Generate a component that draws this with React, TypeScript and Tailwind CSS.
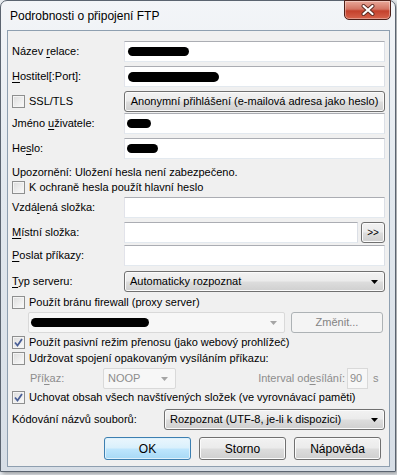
import type { ReactNode } from "react";

const box = "h-[21px] bg-white border border-[#abadb3] border-l-[#e2e3ea] border-r-[#dbdfe6] border-b-[#e3e9ef]";
const btn =
  "rounded-[3px] border border-[#707070] bg-[linear-gradient(to_bottom,#f2f2f2_0%,#ebebeb_48%,#dddddd_52%,#cfcfcf_100%)] shadow-[inset_0_0_0_1px_#fbfbfb]";
const btnOff = "rounded-[3px] border border-[#adb2b5] bg-[#f4f4f4] text-[#838383]";

function Row({ label, mt, children }: { label: ReactNode; mt: string; children: ReactNode }) {
  return (
    <div className={"flex items-center h-[21px] " + mt}>
      <div className="w-[112px] shrink-0">{label}</div>
      <div className="flex-1 flex gap-[3px]">{children}</div>
    </div>
  );
}

function Check({ checked, label, mt }: { checked?: boolean; label: ReactNode; mt: string }) {
  return (
    <div className={"flex items-center h-[14px] gap-[4px] " + mt}>
      <span className="w-[13px] h-[13px] border border-[#8e8f8f] bg-[linear-gradient(135deg,#dcdcdc,#fbfbfb)] shadow-[inset_0_0_0_1px_#f4f4f4] flex items-center justify-center">
        {checked && (
          <svg width="9" height="9" viewBox="0 0 9 9">
            <path d="M1 4.5 L3.5 7.5 L8 1" fill="none" stroke="#4a5f97" strokeWidth="1.8" />
          </svg>
        )}
      </span>
      <span>{label}</span>
    </div>
  );
}

function Arrow({ off }: { off?: boolean }) {
  return (
    <svg width="7" height="4" viewBox="0 0 7 4">
      <path d="M0 0 H7 L3.5 4 Z" fill={off ? "#a5a5a5" : "#000"} />
    </svg>
  );
}

function Blob({ w, ml, h = "h-[9px]" }: { w: string; ml?: string; h?: string }) {
  return <span className={"block rounded-full bg-black " + w + " " + h + " " + (ml ?? "ml-[3px]")} />;
}

export default function App() {
  return (
    <div className="w-[397px] h-[475px] bg-[#e9edf1] font-['Liberation_Sans',Arial,sans-serif] text-[11px] text-black [&_u]:underline-offset-2">
      <div className="relative w-[396px] h-[472px] rounded-t-[7px] border border-[#5b6470] bg-[linear-gradient(to_bottom,#f3f5f8_0%,#e2e8ee_40%,#d7dee6_100%)] shadow-[2px_2px_4px_rgba(0,0,0,0.35)]">
        <div className="h-[29px] flex items-center pl-[9px] text-[12px] [text-shadow:0_0_8px_#fff]">
          Podrobnosti o připojení FTP
        </div>
        <div className="absolute right-[4px] top-[-1px] w-[47px] h-[20px] rounded-b-[5px] border border-[#4d1f18] bg-[linear-gradient(to_bottom,#e9a899_0%,#d37564_45%,#c4412c_55%,#d6634c_100%)] shadow-[inset_0_0_0_1px_rgba(255,255,255,0.35)] flex items-center justify-center">
          <svg width="14" height="12" viewBox="0 0 14 12">
            <path d="M2.5 2 L11.5 10 M11.5 2 L2.5 10" stroke="#5a2a22" strokeWidth="4" strokeLinecap="round" />
            <path d="M2.5 2 L11.5 10 M11.5 2 L2.5 10" stroke="#fff" strokeWidth="2.2" strokeLinecap="round" />
          </svg>
        </div>

        <div className="ml-[6px] w-[383px] h-[437px] border border-[#8e9fb0] bg-[#f0f0f0] pl-[4px] pr-[4px] pt-[10px]">
          <Row label={<>Název <u>r</u>elace:</>} mt="">
            <div className={box + " flex-1 flex items-center border-[#7eb4ea]"}>
              <Blob w="w-[61px]" />
            </div>
          </Row>
          <Row label={<><u>H</u>ostitel[:Port]:</>} mt="mt-[4px]">
            <div className={box + " flex-1 flex items-center"}>
              <Blob w="w-[91px]" h="h-[10px]" />
            </div>
          </Row>
          <div className="flex items-center h-[21px] mt-[4px]">
            <div className="w-[112px]">
              <Check label="SSL/TLS" mt="" />
            </div>
            <div className={btn + " flex-1 h-[21px] flex items-center justify-center"}>
              Anonymní přihlášení (e-mailová adresa jako heslo)
            </div>
          </div>
          <Row label={<>Jméno <u>u</u>živatele:</>} mt="mt-[1px]">
            <div className={box + " flex-1 flex items-center"}>
              <Blob w="w-[24px]" ml="ml-[2px]" />
            </div>
          </Row>
          <Row label={<>He<u>s</u>lo:</>} mt="mt-[4px]">
            <div className={box + " flex-1 flex items-center"}>
              <Blob w="w-[31px]" ml="ml-[2px]" />
            </div>
          </Row>
          <div className="h-[14px] mt-[6px] flex items-center">Upozornění: Uložení hesla není zabezpečeno.</div>
          <Check label="K ochraně hesla použít hlavní heslo" mt="mt-[1px]" />
          <Row label={<>Vzdá<u>l</u>ená složka:</>} mt="mt-[3px]">
            <div className={box + " flex-1"} />
          </Row>
          <Row label={<><u>M</u>ístní složka:</>} mt="mt-[4px]">
            <div className={box + " flex-1"} />
            <div className={btn + " w-[24px] h-[21px] flex items-center justify-center text-[10px]"}>&gt;&gt;</div>
          </Row>
          <Row label={<><u>P</u>oslat příkazy:</>} mt="mt-[2px]">
            <div className={box + " flex-1"} />
          </Row>
          <Row label={<><u>T</u>yp serveru:</>} mt="mt-[5px]">
            <div className={btn + " flex-1 h-[21px] flex items-center justify-between pl-[5px] pr-[6px]"}>
              <span>Automaticky rozpoznat</span>
              <Arrow />
            </div>
          </Row>
          <Check label="Použít bránu firewall (proxy server)" mt="mt-[3px]" />
          <div className="flex h-[21px] mt-[3px] pl-[16px] gap-[6px]">
            <div className="w-[257px] h-[21px] rounded-[2px] border border-[#d9d9d9] bg-[#f7f7f7] flex items-center justify-between pr-[7px]">
              <Blob w="w-[118px]" ml="ml-[2px]" />
              <Arrow off />
            </div>
            <div className={btnOff + " w-[92px] h-[21px] flex items-center justify-center"}>Změnit...</div>
          </div>
          <Check checked label="Použít pasivní režim přenosu (jako webový prohlížeč)" mt="mt-[2px]" />
          <Check label="Udržovat spojení opakovaným vysíláním příkazu:" mt="mt-[2px]" />
          <div className="flex items-center h-[21px] mt-[3px] text-[#8d8d8d]">
            <span className="w-[91px] pl-[18px]">
              Pří<u>k</u>az:
            </span>
            <div className="w-[73px] h-[21px] rounded-[2px] border border-[#d9d9d9] bg-[#f7f7f7] flex items-center justify-between pl-[4px] pr-[7px]">
              <span>NOOP</span>
              <Arrow off />
            </div>
            <span className="flex-1 text-right pr-[2px]">
              Interval od<u>e</u>sílání:
            </span>
            <div className="w-[21px] h-[21px] border border-[#d9d9d9] bg-[#f7f7f7] flex items-center pl-[2px]">90</div>
            <span className="w-[17px] pl-[5px]">s</span>
          </div>
          <Check checked label="Uchovat obsah všech navštívených složek (ve vyrovnávací paměti)" mt="mt-[1px]" />
          <div className="flex items-center h-[21px] mt-[5px]">
            <span className="w-[152px]">Kódování názvů souborů:</span>
            <div className={btn + " flex-1 h-[21px] flex items-center justify-between pl-[5px] pr-[6px]"}>
              <span>Rozpoznat (UTF-8, je-li k dispozici)</span>
              <Arrow />
            </div>
          </div>
          <div className="flex justify-end gap-[8px] mt-[7px] pr-[4px]">
            <div className="w-[87px] h-[23px] rounded-[3px] border border-[#3c7fb1] bg-[linear-gradient(to_bottom,#eaf6fd_0%,#d9f0fc_48%,#bee6fd_52%,#a7d9f5_100%)] shadow-[inset_0_0_0_1px_#dff1fb] flex items-center justify-center text-[12px]">
              OK
            </div>
            <div className={btn + " w-[87px] h-[23px] flex items-center justify-center text-[12px]"}>Storno</div>
            <div className={btn + " w-[87px] h-[23px] flex items-center justify-center text-[12px]"}>Nápověda</div>
          </div>
        </div>
      </div>
    </div>
  );
}
